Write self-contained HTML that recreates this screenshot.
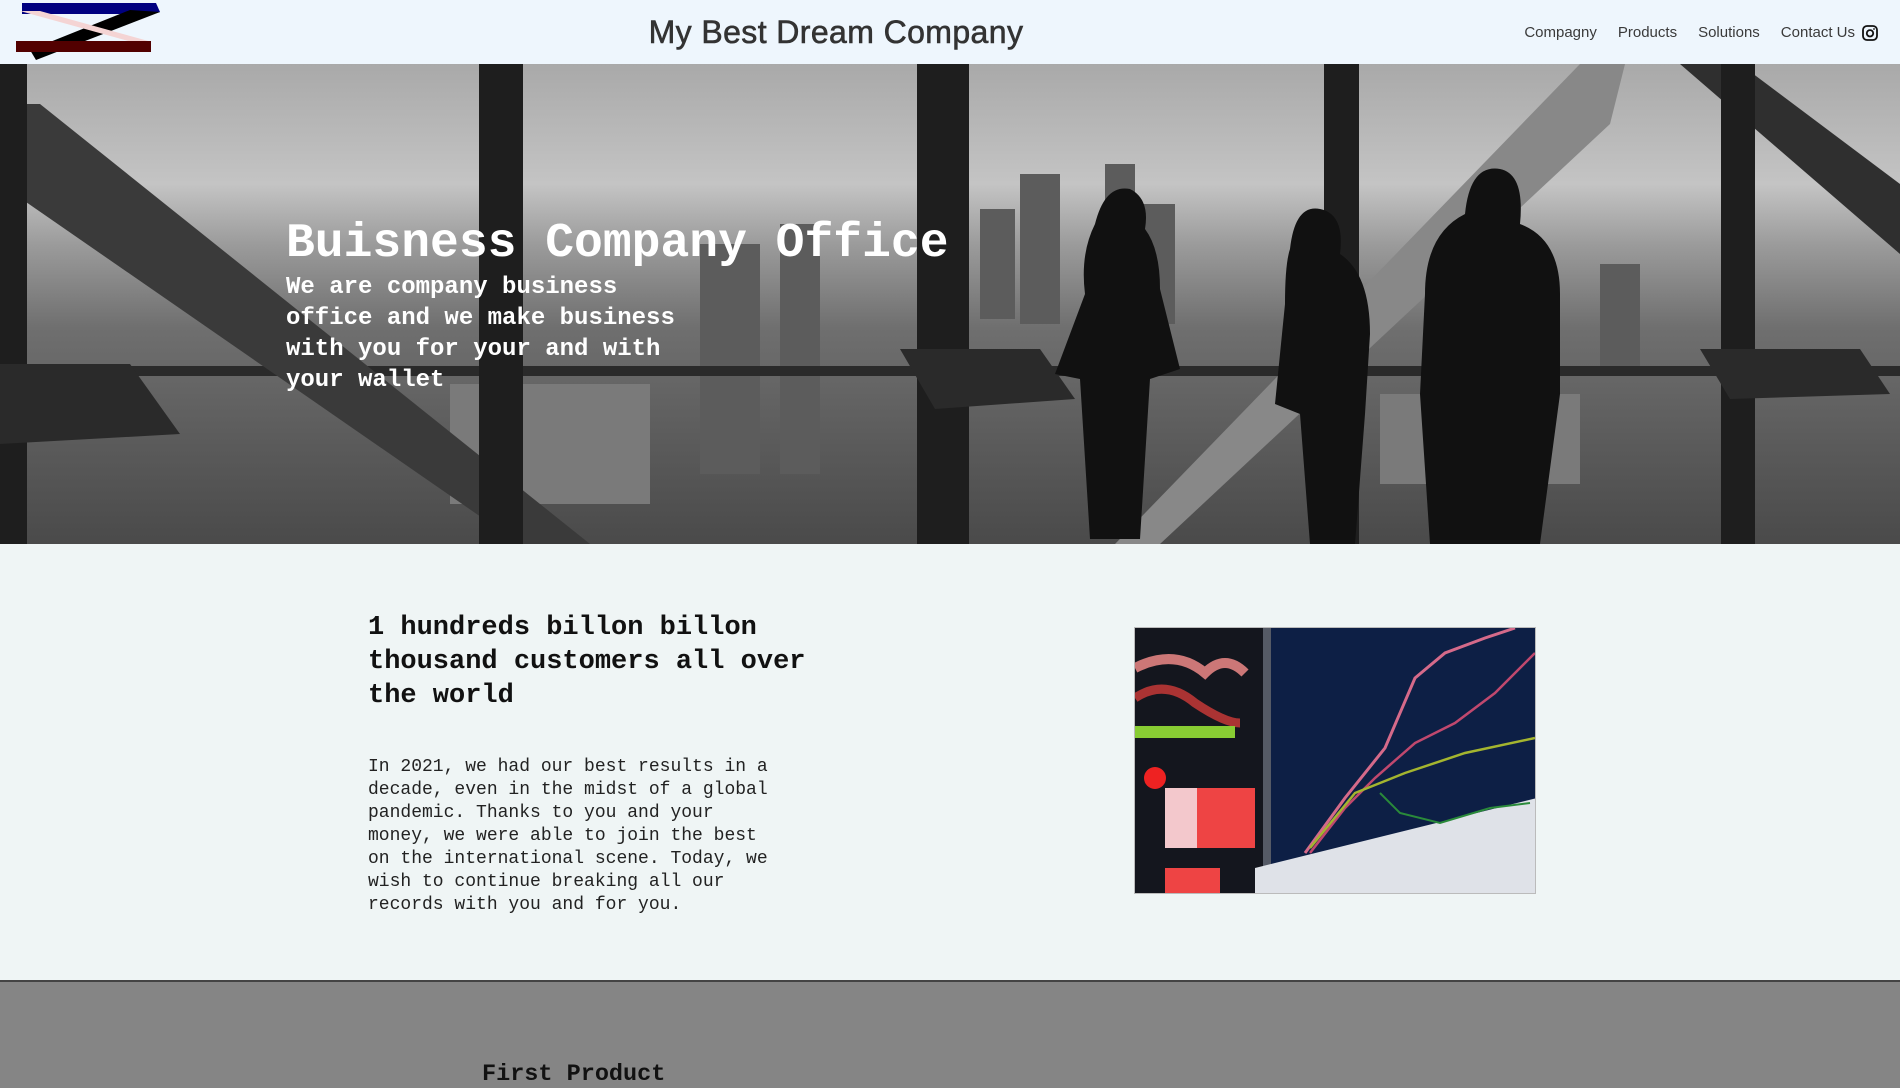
<!DOCTYPE html>
<html><head><meta charset="utf-8"><style>
*{margin:0;padding:0;box-sizing:border-box}
html,body{width:1900px;height:1078px;overflow:hidden;background:#858585}
body{font-family:"Liberation Mono",monospace}
.main{position:absolute;left:0;top:0;width:1900px;height:980px;background:#eff5f5}
header{position:absolute;left:0;top:0;width:1900px;height:64px;background:#eef6fd}
.title{position:absolute;left:0;width:1672px;text-align:center;top:14px;font-family:"Liberation Sans",sans-serif;font-size:32px;color:#333;font-weight:normal;-webkit-text-stroke:0.6px #333;letter-spacing:0.4px}
nav{position:absolute;right:22px;top:24px;font-family:"Liberation Sans",sans-serif;font-size:15px;color:#3a3a3a;display:flex;align-items:center}
nav span{margin-left:21px}
.hero{position:absolute;left:0;top:64px;width:1900px;height:480px;overflow:hidden}
.ht{position:absolute;left:286px;top:154px;color:#fff;font-weight:bold;font-size:48px;line-height:52px}
.hs{position:absolute;left:286px;top:208px;color:#fff;font-weight:bold;font-size:24px;line-height:31px;width:420px}
.h2{position:absolute;left:368px;top:611px;font-size:27px;line-height:34px;font-weight:bold;color:#111}
.p{position:absolute;left:368px;top:756px;font-size:18px;line-height:23px;color:#222}
.img{position:absolute;left:1134px;top:627px;width:402px;height:267px;border:1px solid #bbb;overflow:hidden}
.foot{position:absolute;left:0;top:980px;width:1900px;height:98px;background:#858585;border-top:2px solid #444}
.fp{position:absolute;left:482px;top:1061px;font-size:23.5px;font-weight:bold;color:#111}
</style></head><body>
<div class="main"></div>
<header>
<svg style="position:absolute;left:0;top:0" width="170" height="64" viewBox="0 0 170 64">
<polygon points="22,3 156,3 160,12 153,14 22,14" fill="#000080"/>
<polygon points="130,10 160,12 36,60 30,50" fill="#000"/>
<polygon points="20,11 40,11 152,42 132,42" fill="#f4d4d4"/>
<rect x="16" y="41" width="135" height="11" fill="#520000"/>
</svg>
<div class="title">My Best Dream Company</div>
<nav><span>Compagny</span><span>Products</span><span>Solutions</span><span>Contact Us</span>
<svg style="margin-left:7px" width="16" height="16" viewBox="0 0 16 16"><rect x="1" y="1" width="14" height="14" rx="4" fill="none" stroke="#111" stroke-width="1.8"/><circle cx="8" cy="8.3" r="3.2" fill="none" stroke="#111" stroke-width="1.8"/><circle cx="12" cy="4" r="0.9" fill="#111"/></svg></nav>
</header>
<div class="hero">
<svg width="1900" height="480" viewBox="0 0 1900 480">
<defs><linearGradient id="sky" x1="0" y1="0" x2="0" y2="1">
<stop offset="0" stop-color="#a9a9a9"/><stop offset="0.25" stop-color="#c4c4c4"/><stop offset="0.38" stop-color="#9a9a9a"/><stop offset="0.55" stop-color="#6f6f6f"/><stop offset="0.8" stop-color="#5a5a5a"/><stop offset="1" stop-color="#4a4a4a"/></linearGradient></defs>
<rect width="1900" height="480" fill="url(#sky)"/>
<g fill="#5c5c5c"><rect x="1020" y="110" width="40" height="150"/><rect x="1105" y="100" width="30" height="160"/><rect x="1140" y="140" width="35" height="120"/><rect x="980" y="145" width="35" height="110"/><rect x="700" y="180" width="60" height="230"/><rect x="780" y="160" width="40" height="250"/><rect x="1600" y="200" width="40" height="110"/></g>
<g fill="#7a7a7a"><rect x="450" y="320" width="200" height="120"/><rect x="1380" y="330" width="200" height="90"/></g>
<rect x="0" y="302" width="1900" height="10" fill="#2a2a2a"/>
<polygon points="0,40 40,40 590,480 520,480 0,120" fill="#3a3a3a"/>
<polygon points="1580,0 1625,0 1610,60 1160,480 1115,480" fill="#888"/>
<polygon points="1680,0 1740,0 1900,120 1900,190" fill="#2f2f2f"/>
<g fill="#1e1e1e"><rect x="0" y="0" width="27" height="480"/><rect x="479" y="0" width="44" height="480"/><rect x="917" y="0" width="52" height="480"/><rect x="1324" y="0" width="35" height="480"/><rect x="1721" y="0" width="34" height="480"/></g>
<polygon points="0,300 130,300 180,370 0,380" fill="#2a2a2a"/>
<polygon points="900,285 1040,285 1075,335 935,345" fill="#2a2a2a"/>
<polygon points="1700,285 1860,285 1890,330 1730,335" fill="#2a2a2a"/>
<g fill="#111">
<path d="M1095 160 q10-40 35-35 q20 10 15 40 q15 20 15 60 l20 80 l-30 10 l-10 160 h-50 l-10-160 l-25-5 l30-80 q-5-40 10-70z"/>
<path d="M1290 185 q5-45 30-40 q25 5 20 45 q30 20 30 80 l-5 80 l-10 130 h-45 l-10-130 l-25-10 l10-100 q0-40 5-55z"/>
<path d="M1465 150 q5-50 35-45 q25 5 20 55 q40 15 40 70 l0 100 l-20 150 h-110 l-10-150 l5-100 q0-60 40-80z"/>
</g>
</svg>
<div class="ht">Buisness Company Office</div>
<div class="hs">We are company business office and we make business with you for your and with your wallet</div>
</div>
<div class="h2">1 hundreds billon billon<br>thousand customers all over<br>the world</div>
<div class="p">In 2021, we had our best results in a<br>decade, even in the midst of a global<br>pandemic. Thanks to you and your<br>money, we were able to join the best<br>on the international scene. Today, we<br>wish to continue breaking all our<br>records with you and for you.</div>
<div class="img"><svg width="402" height="267" viewBox="0 0 402 267">
<rect width="402" height="267" fill="#0d1f45"/>
<rect width="130" height="267" fill="#14161e"/>
<rect x="128" y="0" width="8" height="267" fill="#555a66"/>
<path d="M0 40 q40-20 70 5 q20 -20 40 0" stroke="#c77" stroke-width="10" fill="none"/>
<path d="M0 70 q30-20 60 5 q30 20 45 20" stroke="#a33" stroke-width="9" fill="none"/>
<rect x="0" y="98" width="100" height="12" fill="#8c3"/>
<circle cx="20" cy="150" r="11" fill="#e22"/>
<rect x="30" y="160" width="90" height="60" fill="#e44"/><rect x="30" y="160" width="32" height="60" fill="#f3c8cc"/>
<rect x="30" y="240" width="55" height="25" fill="#e44"/>
<polygon points="120,240 402,170 402,267 120,267" fill="#dfe2e8"/>
<path d="M170 225 l40-55 l40-50 l30-70 l30-25 l40-15 l30-10" stroke="#d56a8a" stroke-width="3" fill="none"/>
<path d="M175 225 l35-45 l30-30 l40-35 l40-20 l40-30 l40-40" stroke="#c0486e" stroke-width="2.5" fill="none"/>
<path d="M175 220 l45-55 l50-20 l60-20 l70-15" stroke="#a4b52f" stroke-width="2.5" fill="none"/>
<path d="M245 165 l20 20 l40 10 l50-15 l40 -5" stroke="#2a8a3a" stroke-width="2" fill="none"/>
</svg></div>
<div class="foot"></div>
<div class="fp">First Product</div>
</body></html>
